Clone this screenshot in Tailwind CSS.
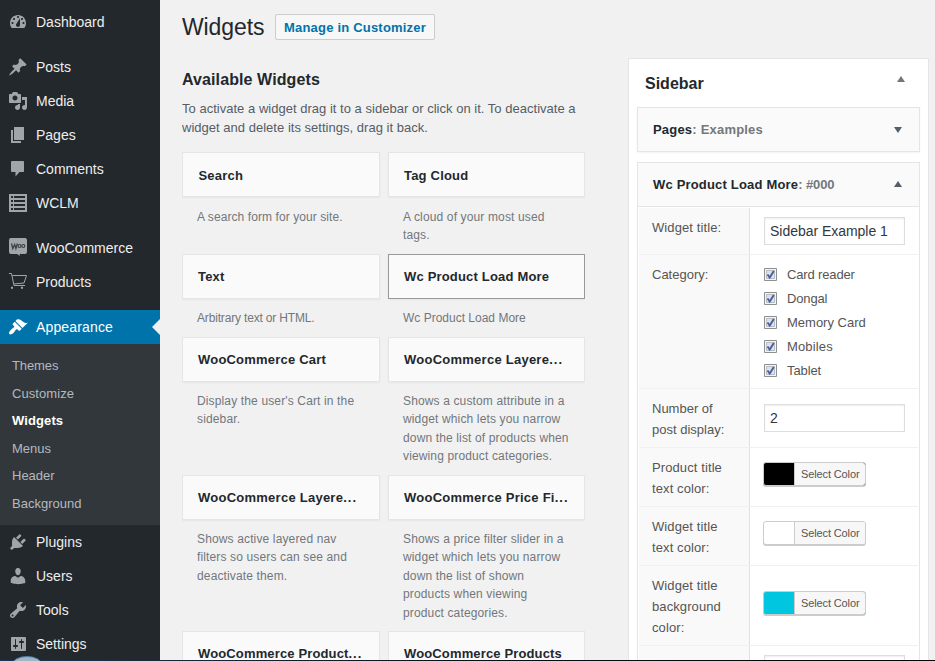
<!DOCTYPE html>
<html lang="en">
<head>
<meta charset="utf-8">
<title>Widgets</title>
<script src="https://cdn.jsdelivr.net/npm/@tailwindcss/browser@4"></script>
</head>
<body class="relative flex h-[661px] w-[935px] overflow-hidden bg-[#f1f1f1] font-['Liberation_Sans',Arial,sans-serif] text-[13px] text-[#555d66]">

<nav class="flex h-full w-40 shrink-0 flex-col overflow-hidden bg-[#23282d] pt-[5px] text-[14px] text-[#eee]">
  <a class="flex h-[34px] shrink-0 items-center gap-2 pl-2"><svg class="size-5 fill-[#a0a5aa]" viewBox="0 0 20 20"><path fill-rule="evenodd" d="M3.760 16h12.480c1.100-1.370 1.760-3.110 1.760-5 0-4.420-3.580-8-8-8s-8 3.580-8 8c0 1.890.66 3.630 1.760 5zM10 4c.55 0 1 .45 1 1s-.45 1-1 1-1-.45-1-1 .45-1 1-1zM6 6c.55 0 1 .45 1 1s-.45 1-1 1-1-.45-1-1 .45-1 1-1zm8 0c.55 0 1 .45 1 1s-.45 1-1 1-1-.45-1-1 .45-1 1-1zm-5.400 5.600L12 6.200v6.800c0 1.100-.9 2-2 2s-2-.9-2-2c0-.57.24-1.080.6-1.400zM4.500 10c.55 0 1 .45 1 1s-.45 1-1 1-1-.45-1-1 .45-1 1-1zm11 0c.55 0 1 .45 1 1s-.45 1-1 1-1-.45-1-1 .45-1 1-1z"/></svg><span>Dashboard</span></a>
  <a class="mt-[11px] flex h-[34px] shrink-0 items-center gap-2 pl-2"><svg class="size-5 fill-[#a0a5aa]" viewBox="0 0 20 20"><path d="M10.440 3.020l1.820-1.820 6.360 6.350-1.830 1.820c-1.050-.68-2.480-.57-3.410.36l-.75.75c-.92.93-1.040 2.350-.35 3.410l-1.830 1.820-2.410-2.410-2.800 2.790c-.42.42-3.380 2.710-3.800 2.290s1.860-3.390 2.280-3.810l2.790-2.790L4.100 9.360l1.830-1.820c1.050.69 2.480.57 3.400-.36l.75-.75c.93-.92 1.050-2.350.36-3.410z"/></svg><span>Posts</span></a>
  <a class="flex h-[34px] shrink-0 items-center gap-2 pl-2"><svg class="size-5 fill-[#a0a5aa]" viewBox="0 0 20 20"><path fill-rule="evenodd" d="M13 11V4c0-.55-.45-1-1-1h-1.670L9 1H5L3.670 3H2c-.55 0-1 .45-1 1v7c0 .55.45 1 1 1h10c.55 0 1-.45 1-1zM7 4.500c1.380 0 2.500 1.120 2.500 2.500S8.380 9.500 7 9.500 4.500 8.380 4.500 7 5.620 4.500 7 4.500zM14 6h5v10.500c0 1.380-1.120 2.500-2.500 2.500S14 17.880 14 16.500s1.120-2.500 2.500-2.500c.17 0 .34.02.5.05V9h-3V6zm-4 8.050V13h2v3.500c0 1.380-1.120 2.500-2.500 2.500S7 17.880 7 16.500 8.120 14 9.500 14c.17 0 .34.02.5.05z"/></svg><span>Media</span></a>
  <a class="flex h-[34px] shrink-0 items-center gap-2 pl-2"><svg class="size-5 fill-[#a0a5aa]" viewBox="0 0 20 20"><path d="M6 15V2h10v13H6zm-1 1h8v2H3V5h2v11z"/></svg><span>Pages</span></a>
  <a class="flex h-[34px] shrink-0 items-center gap-2 pl-2"><svg class="size-5 fill-[#a0a5aa]" viewBox="0 0 20 20"><path d="M4.500 2H15c.6 0 1 .4 1 1v9c0 .6-.4 1-1 1h-3.500L7.500 17.500V13h-3c-.9 0-1.500-.4-1.500-1V3c0-.6.6-1 1.500-1z"/></svg><span>Comments</span></a>
  <a class="flex h-[34px] shrink-0 items-center gap-2 pl-2"><svg class="size-5 fill-[#a0a5aa]" viewBox="0 0 20 20"><path fill-rule="evenodd" d="M1 1h18v18H1zM3 3v2h2V3zM6 3v2h11V3zM3 7v2h2V7zM6 7v2h11V7zM3 11v2h2v-2zM6 11v2h11v-2zM3 15v2h2v-2zM6 15v2h11v-2z"/></svg><span>WCLM</span></a>
  <a class="mt-[11px] flex h-[34px] shrink-0 items-center gap-2 pl-2"><svg class="size-5 fill-[#a0a5aa]" viewBox="0 0 20 20"><path d="M3 0h14a2 2 0 0 1 2 2v12a2 2 0 0 1-2 2h-5.500l.5 2-3-2H3a2 2 0 0 1-2-2V2a2 2 0 0 1 2-2z"/><path class="fill-none stroke-[#3a4046]" stroke-width="1.300" d="M3.500 5.500l1.300 5L6.700 6.500l1.200 4 1.500-5"/><circle class="fill-none stroke-[#3a4046]" stroke-width="1.200" cx="11.500" cy="8" r="1.500"/><circle class="fill-none stroke-[#3a4046]" stroke-width="1.200" cx="15.300" cy="8" r="1.500"/></svg><span>WooCommerce</span></a>
  <a class="flex h-[34px] shrink-0 items-center gap-2 pl-2"><svg class="size-5 fill-none stroke-[#a0a5aa]" viewBox="0 0 20 20"><path d="M1 1.500h2.500L6 13.500h11M4.300 3.500h14.200l-2.500 7.500-10.300 1"/><path class="fill-[#a0a5aa] stroke-none" d="M3 14.800h2v2H3zM13 14.800h2v2h-2z"/></svg><span>Products</span></a>
  <a class="relative mt-[11px] flex h-[34px] shrink-0 items-center gap-2 bg-[#0073aa] pl-2 tracking-[0.15px] text-white"><svg class="size-5 fill-white" viewBox="0 0 20 20"><path d="M14.480 11.060L7.410 3.990l1.500-1.500c.5-.56 2.300-.47 3.510.32 1.210.8 1.430 1.280 2.910 2.100 1.180.64 2.450 1.260 4.450.85zm-.71.71L6.700 4.700 4.930 6.470c-.39.39-.39 1.020 0 1.410l1.060 1.060c.39.39.39 1.030 0 1.420-.6.6-1.430 1.110-2.210 1.690-.35.26-.7.53-1.010.84C1.430 14.230.4 16.080 1.400 17.070c.99 1 2.840-.03 4.180-1.360.31-.31.58-.66.85-1.020.57-.78 1.080-1.610 1.690-2.210.39-.39 1.020-.39 1.410 0l1.060 1.060c.39.39 1.020.39 1.410 0z"/></svg><span>Appearance</span><svg class="absolute right-0 top-[9px] h-4 w-2 fill-[#f1f1f1]" viewBox="0 0 8 16"><path d="M8 0v16L0 8z"/></svg></a>
  <div class="flex h-[181px] shrink-0 flex-col bg-[#32373c] pl-3 pt-[8px] text-[13px] text-[#b4b9be]">
    <a class="h-[27.6px] leading-[28px] tracking-[-0.1px]">Themes</a>
    <a class="h-[27.6px] leading-[28px] tracking-[0.08px]">Customize</a>
    <a class="h-[27.6px] font-bold leading-[28px] tracking-[0.1px] text-white">Widgets</a>
    <a class="h-[27.6px] leading-[28px]">Menus</a>
    <a class="h-[27.6px] leading-[28px]">Header</a>
    <a class="h-[27.6px] leading-[28px]">Background</a>
  </div>
  <a class="flex h-[34px] shrink-0 items-center gap-2 pl-2"><svg class="size-5 fill-[#a0a5aa]" viewBox="0 0 20 20"><path d="M13.110 4.360L9.870 7.600 8 5.730l3.240-3.240c.35-.34 1.050-.2 1.560.32.52.51.66 1.210.31 1.550zm-8 1.770l.91-1.120 9.010 9.010-1.190.84c-.71.71-2.630 1.160-3.820 1.160H6.140L4.900 17.260c-.59.59-1.540.59-2.120 0-.59-.58-.59-1.530 0-2.120l1.240-1.240v-3.880c0-1.130.4-3.190 1.090-3.890zm7.260 3.970l3.240-3.240c.34-.35 1.040-.21 1.550.31.52.51.66 1.210.31 1.550l-3.240 3.250z"/></svg><span>Plugins</span></a>
  <a class="flex h-[34px] shrink-0 items-center gap-2 pl-2"><svg class="size-5 fill-[#a0a5aa]" viewBox="0 0 20 20"><path d="M10 9.250c-2.270 0-2.730-3.440-2.730-3.440C7 4.020 7.820 2 9.970 2c2.160 0 2.980 2.020 2.710 3.810 0 0-.41 3.440-2.680 3.440zm0 2.570L12.720 10c2.390 0 4.520 2.330 4.520 4.530v2.490s-3.650 1.130-7.240 1.130c-3.650 0-7.240-1.130-7.240-1.130v-2.490c0-2.250 1.940-4.480 4.470-4.480z"/></svg><span>Users</span></a>
  <a class="flex h-[34px] shrink-0 items-center gap-2 pl-2"><svg class="size-5 fill-[#a0a5aa]" viewBox="0 0 20 20"><path fill-rule="evenodd" d="M16.680 9.770c-1.340 1.340-3.300 1.670-4.950.99l-5.410 6.520c-.99.99-2.590.99-3.580 0s-.99-2.590 0-3.570l6.520-5.420c-.68-1.650-.35-3.610.99-4.950 1.280-1.280 3.120-1.620 4.720-1.060l-2.890 2.890 2.820 2.820 2.860-2.870c.53 1.580.18 3.390-1.080 4.650zM3.810 16.210c.4.39 1.040.39 1.430 0 .4-.4.4-1.040 0-1.430-.39-.4-1.030-.4-1.430 0-.39.39-.39 1.030 0 1.430z"/></svg><span>Tools</span></a>
  <a class="flex h-[34px] shrink-0 items-center gap-2 pl-2"><svg class="size-5 fill-[#a0a5aa]" viewBox="0 0 20 20"><path fill-rule="evenodd" d="M18 16V4c0-.55-.45-1-1-1H4c-.55 0-1 .45-1 1v12c0 .55.45 1 1 1h13c.55 0 1-.45 1-1zM8 11h1c.55 0 1 .45 1 1s-.45 1-1 1H8v1.500c0 .28-.22.5-.5.5s-.5-.22-.5-.5V13H6c-.55 0-1-.45-1-1s.45-1 1-1h1V5.500c0-.28.22-.5.5-.5s.5.22.5.5V11zm5-2h-1c-.55 0-1-.45-1-1s.45-1 1-1h1V5.500c0-.28.22-.5.5-.5s.5.22.5.5V7h1c.55 0 1 .45 1 1s-.45 1-1 1h-1v5.500c0 .28-.22.5-.5.5s-.5-.22-.5-.5V9z"/></svg><span>Settings</span></a>
</nav>

<main class="ml-[22px] h-full w-[403px] shrink-0 overflow-hidden">
  <div class="flex h-[54px] items-center">
    <h1 class="w-[93px] text-[23px] leading-[27px] tracking-[-0.1px] text-[#23282d]">Widgets</h1>
    <a class="flex h-[26px] w-[160px] items-center justify-center rounded-xs border border-[#ccc] bg-[#f7f7f7] pt-px text-[13px] font-bold tracking-[0.2px] text-[#0073aa]">Manage in Customizer</a>
  </div>
  <h2 class="mt-[15px] h-[22px] text-[16px] font-bold leading-[22px] tracking-[0.1px] text-[#23282d]">Available Widgets</h2>
  <p class="mt-[8px] h-[53px] whitespace-nowrap text-[13px] leading-[19px] tracking-[0.02px]">To activate a widget drag it to a sidebar or click on it. To deactivate a<br>widget and delete its settings, drag it back.</p>

  <div class="grid grid-cols-[198px_197px] grid-rows-[102px_83px_138px_156px_30px] gap-x-2 text-[12px] leading-[18.4px] tracking-[0.14px] text-[#72777c]">
    <div><h3 class="h-[45px] border border-[#e5e5e5] bg-[#fafafa] pl-[15.500px] text-[13px] font-bold leading-[45px] tracking-[0.2px] text-[#23282d] shadow-xs">Search</h3><p class="whitespace-nowrap pl-[15px] pt-[10.500px] tracking-[0.08px]">A search form for your site.</p></div>
    <div><h3 class="h-[45px] border border-[#e5e5e5] bg-[#fafafa] pl-[15px] text-[13px] font-bold leading-[45px] tracking-[0.2px] text-[#23282d] shadow-xs">Tag Cloud</h3><p class="whitespace-nowrap pl-[15px] pt-[10.500px]">A cloud of your most used<br>tags.</p></div>
    <div><h3 class="h-[45px] border border-[#e5e5e5] bg-[#fafafa] pl-[15px] text-[13px] font-bold leading-[44px] tracking-[0.2px] text-[#23282d] shadow-xs">Text</h3><p class="whitespace-nowrap pl-[15px] pt-[10px] tracking-[-0.17px]">Arbitrary text or HTML.</p></div>
    <div><h3 class="h-[45px] border border-[#999] bg-[#fafafa] pl-[15px] text-[13px] font-bold leading-[44px] tracking-[0.18px] text-[#23282d] shadow-xs">Wc Product Load More</h3><p class="whitespace-nowrap pl-[15px] pt-[10px] tracking-normal">Wc Product Load More</p></div>
    <div><h3 class="h-[45px] border border-[#e5e5e5] bg-[#fafafa] pl-[15px] text-[13px] font-bold leading-[44px] tracking-[0.2px] text-[#23282d] shadow-xs">WooCommerce Cart</h3><p class="whitespace-nowrap pl-[15px] pt-[10px]">Display the user's Cart in the<br>sidebar.</p></div>
    <div><h3 class="h-[45px] border border-[#e5e5e5] bg-[#fafafa] pl-[15px] text-[13px] font-bold leading-[44px] tracking-[0.25px] text-[#23282d] shadow-xs">WooCommerce Layere<span class="tracking-[1px]">...</span></h3><p class="whitespace-nowrap pl-[15px] pt-[10px]">Shows a custom attribute in a<br>widget which lets you narrow<br>down the list of products when<br>viewing product categories.</p></div>
    <div><h3 class="h-[45px] border border-[#e5e5e5] bg-[#fafafa] pl-[15px] text-[13px] font-bold leading-[44px] tracking-[0.25px] text-[#23282d] shadow-xs">WooCommerce Layere<span class="tracking-[1px]">...</span></h3><p class="whitespace-nowrap pl-[15px] pt-[10px]">Shows active layered nav<br>filters so users can see and<br>deactivate them.</p></div>
    <div><h3 class="h-[45px] border border-[#e5e5e5] bg-[#fafafa] pl-[15px] text-[13px] font-bold leading-[44px] tracking-[0.25px] text-[#23282d] shadow-xs">WooCommerce Price Fi<span class="tracking-[1px]">...</span></h3><p class="whitespace-nowrap pl-[15px] pt-[10px]">Shows a price filter slider in a<br>widget which lets you narrow<br>down the list of shown<br>products when viewing<br>product categories.</p></div>
    <h3 class="h-[30px] border border-b-0 border-[#e5e5e5] bg-[#fafafa] pl-[15px] text-[13px] font-bold leading-[44px] tracking-[0.14px] text-[#23282d]">WooCommerce Product<span class="tracking-[1px]">...</span></h3>
    <h3 class="h-[30px] border border-b-0 border-[#e5e5e5] bg-[#fafafa] pl-[15px] text-[13px] font-bold leading-[44px] tracking-[0.14px] text-[#23282d]">WooCommerce Products</h3>
  </div>
</main>

<section class="ml-[43px] mt-[58px] h-[603px] w-[301px] shrink-0 overflow-hidden border border-b-0 border-[#e5e5e5] bg-white px-2">
  <div class="flex h-12 justify-between pl-2 pr-[15px]">
    <h2 class="text-[16px] font-bold leading-[50px] text-[#23282d]">Sidebar</h2>
    <svg class="mt-[17px] h-[6px] w-2 fill-[#72777c]" viewBox="0 0 8 6"><path d="M4 0l4 6H0z"/></svg>
  </div>
  <div class="flex h-[45px] items-center justify-between border border-[#e5e5e5] bg-[#fafafa] pl-[15px] pr-[17px] shadow-xs">
    <h3 class="pt-px font-bold tracking-[0.2px] text-[#23282d]">Pages<span class="text-[#72777c]">: Examples</span></h3>
    <svg class="h-[6px] w-2 fill-[#555d66]" viewBox="0 0 8 6"><path d="M4 6L0 0h8z"/></svg>
  </div>
  <div class="mt-[10px] border border-[#e5e5e5]">
    <div class="flex h-[44px] items-center justify-between border-b border-[#e5e5e5] bg-[#fafafa] pl-[15px] pr-[17px]">
      <h3 class="pt-px font-bold tracking-[0.18px] text-[#23282d]">Wc Product Load More<span class="tracking-[-0.1px] text-[#72777c]">: #000</span></h3>
      <svg class="mb-px h-[6px] w-2 fill-[#555d66]" viewBox="0 0 8 6"><path d="M4 0l4 6H0z"/></svg>
    </div>
    <div class="px-px pt-px leading-[21px] tracking-[0.1px] text-[#555]">
      <div class="flex h-[47px] border-b border-[#f1f1f1]">
        <label class="w-[111px] shrink-0 border-r border-[#e1e1e1] bg-[#f9f9f9] pl-[13px] pt-[9px]">Widget title:</label>
        <div class="pl-[14px] pt-[9px]"><div class="h-[28px] w-[141px] border border-[#ddd] bg-white pl-[5px] text-[14px] leading-[27px] tracking-[-0.03px] text-[#32373c] shadow-[inset_0_1px_2px_rgba(0,0,0,0.07)]">Sidebar Example 1</div></div>
      </div>
      <div class="flex h-[134px] border-b border-[#f1f1f1]">
        <label class="w-[111px] shrink-0 border-r border-[#e1e1e1] bg-[#f9f9f9] pl-[13px] pt-[9px] tracking-[0]">Category:</label>
        <div class="flex flex-col pl-[14px] pt-[7px] leading-[24px]">
          <div class="flex h-6 items-center gap-[10px]"><svg class="size-[13px]" viewBox="0 0 13 13"><path fill="#f4f4f4" stroke="#8e8f8f" d="M.5.500h12v12H.5z"/><path fill="#dde1e7" stroke="#b8bec8" d="M2.500 2.500h8v8h-8z"/><path fill="none" stroke="#4b5f9e" stroke-width="1.900" d="M3.500 6.500l2.200 3L9.800 3"/></svg><span class="pt-px tracking-[-0.15px]">Card reader</span></div>
          <div class="flex h-6 items-center gap-[10px]"><svg class="size-[13px]" viewBox="0 0 13 13"><path fill="#f4f4f4" stroke="#8e8f8f" d="M.5.500h12v12H.5z"/><path fill="#dde1e7" stroke="#b8bec8" d="M2.500 2.500h8v8h-8z"/><path fill="none" stroke="#4b5f9e" stroke-width="1.900" d="M3.500 6.500l2.200 3L9.800 3"/></svg><span class="pt-px tracking-[-0.15px]">Dongal</span></div>
          <div class="flex h-6 items-center gap-[10px]"><svg class="size-[13px]" viewBox="0 0 13 13"><path fill="#f4f4f4" stroke="#8e8f8f" d="M.5.500h12v12H.5z"/><path fill="#dde1e7" stroke="#b8bec8" d="M2.500 2.500h8v8h-8z"/><path fill="none" stroke="#4b5f9e" stroke-width="1.900" d="M3.500 6.500l2.200 3L9.800 3"/></svg><span class="pt-px tracking-[0]">Memory Card</span></div>
          <div class="flex h-6 items-center gap-[10px]"><svg class="size-[13px]" viewBox="0 0 13 13"><path fill="#f4f4f4" stroke="#8e8f8f" d="M.5.500h12v12H.5z"/><path fill="#dde1e7" stroke="#b8bec8" d="M2.500 2.500h8v8h-8z"/><path fill="none" stroke="#4b5f9e" stroke-width="1.900" d="M3.500 6.500l2.200 3L9.800 3"/></svg><span class="pt-px tracking-[0.15px]">Mobiles</span></div>
          <div class="flex h-6 items-center gap-[10px]"><svg class="size-[13px]" viewBox="0 0 13 13"><path fill="#f4f4f4" stroke="#8e8f8f" d="M.5.500h12v12H.5z"/><path fill="#dde1e7" stroke="#b8bec8" d="M2.500 2.500h8v8h-8z"/><path fill="none" stroke="#4b5f9e" stroke-width="1.900" d="M3.500 6.500l2.200 3L9.800 3"/></svg><span class="pt-px tracking-[-0.1px]">Tablet</span></div>
        </div>
      </div>
      <div class="flex h-[59px] border-b border-[#f1f1f1]">
        <label class="w-[111px] shrink-0 border-r border-[#e1e1e1] bg-[#f9f9f9] pl-[13px] pt-[9px] tracking-[0]">Number of<br>post display:</label>
        <div class="pl-[14px] pt-[15px]"><div class="h-[28px] w-[141px] border border-[#ddd] bg-white pl-[5px] text-[14px] leading-[27px] text-[#32373c] shadow-[inset_0_1px_2px_rgba(0,0,0,0.07)]">2</div></div>
      </div>
      <div class="flex h-[59px] border-b border-[#f1f1f1]">
        <label class="w-[111px] shrink-0 border-r border-[#e1e1e1] bg-[#f9f9f9] pl-[13px] pt-[9px]">Product title<br>text color:</label>
        <div class="pl-[13px] pt-[14px]"><div class="flex h-[24px] w-[103px] overflow-hidden rounded-[3px] border border-[#ccc] bg-black shadow-[0_1px_0_#ccc]"><span class="ml-[30px] grow border-l border-[#ccc] bg-[#f7f7f7] pl-[6px] text-[11px] leading-[23px] tracking-[-0.12px]">Select Color</span></div></div>
      </div>
      <div class="flex h-[59px] border-b border-[#f1f1f1]">
        <label class="w-[111px] shrink-0 border-r border-[#e1e1e1] bg-[#f9f9f9] pl-[13px] pt-[9px]">Widget title<br>text color:</label>
        <div class="pl-[13px] pt-[14px]"><div class="flex h-[24px] w-[103px] overflow-hidden rounded-[3px] border border-[#ccc] bg-white shadow-[0_1px_0_#ccc]"><span class="ml-[30px] grow border-l border-[#ccc] bg-[#f7f7f7] pl-[6px] text-[11px] leading-[23px] tracking-[-0.12px]">Select Color</span></div></div>
      </div>
      <div class="flex h-[80px] border-b border-[#f1f1f1]">
        <label class="w-[111px] shrink-0 border-r border-[#e1e1e1] bg-[#f9f9f9] pl-[13px] pt-[9px]">Widget title<br>background<br>color:</label>
        <div class="pl-[13px] pt-[25px]"><div class="flex h-[24px] w-[103px] overflow-hidden rounded-[3px] border border-[#ccc] bg-[#00c6e0] shadow-[0_1px_0_#ccc]"><span class="ml-[30px] grow border-l border-[#ccc] bg-[#f7f7f7] pl-[6px] text-[11px] leading-[23px] tracking-[-0.12px]">Select Color</span></div></div>
      </div>
      <div class="flex h-[15px]">
        <div class="w-[111px] shrink-0 border-r border-[#e1e1e1] bg-[#f9f9f9]"></div>
        <div class="pl-[14px] pt-[9px]"><div class="h-[6px] w-[141px] border border-b-0 border-[#ddd] bg-white shadow-[inset_0_1px_2px_rgba(0,0,0,0.07)]"></div></div>
      </div>
    </div>
  </div>
</section>

<!-- Taskbar edge with the start orb -->
<div class="absolute bottom-0 left-0 h-px w-full bg-linear-to-r from-[#1b3a52] via-[#0a0f18] to-[#05060a]"></div>
<svg class="absolute bottom-0 left-[13px] h-[5px] w-[28px]" viewBox="0 0 28 5"><ellipse cx="14" cy="9" rx="15" ry="8.500" fill="#9fb6c9" stroke="#4f7ba0"/></svg>
</body>
</html>
